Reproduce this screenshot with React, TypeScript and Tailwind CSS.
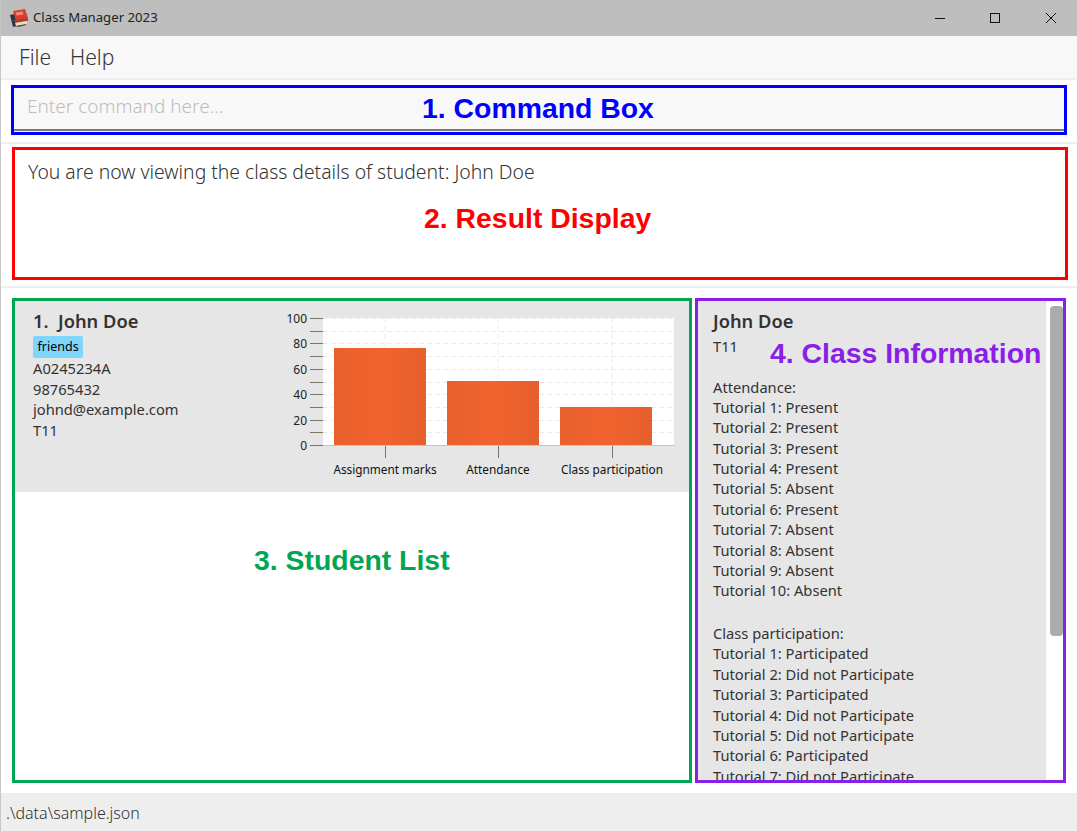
const attendance = ["Present", "Present", "Present", "Present", "Absent", "Present", "Absent", "Absent", "Absent", "Absent"];
const participation = ["Participated", "Did not Participate", "Participated", "Did not Participate", "Did not Participate", "Participated", "Did not Participate"];

const bars = [
  { label: "Assignment marks", x: 54, top: 43, tick: 105 },
  { label: "Attendance", x: 167, top: 76, tick: 218 },
  { label: "Class participation", x: 280, top: 102, tick: 332 },
];

function BarChart() {
  const rows = [13, 26, 38, 51, 64, 77, 89, 102, 115, 127];
  return (
    <svg width="400" height="180" className="shrink-0" style={{ fontFamily: "'Noto Sans', sans-serif" }}>
      <defs>
        <linearGradient id="bar" x1="0" x2="1" y1="0" y2="0">
          <stop offset="0" stopColor="#e8602d" />
          <stop offset="0.5" stopColor="#f2632e" />
          <stop offset="1" stopColor="#e55f2c" />
        </linearGradient>
      </defs>
      <rect x="43" y="13" width="351" height="127" fill="#fff" />
      {rows.map((r) => (
        <line key={r} x1="43" x2="394" y1={r + 0.5} y2={r + 0.5} stroke="#ececec" strokeDasharray="5 3" />
      ))}
      {[105, 218, 332].map((t) => (
        <line key={t} x1={t} x2={t} y1="13" y2="140" stroke="#ececec" strokeDasharray="5 3" />
      ))}
      {bars.map((b) => (
        <rect key={b.label} x={b.x} y={b.top} width="92" height={140 - b.top} fill="url(#bar)" />
      ))}
      <line x1="43" x2="395" y1="140.5" y2="140.5" stroke="#c4c4c4" />
      {[13, 26, 38, 51, 64, 77, 89, 102, 115, 127, 140].map((r) => (
        <line key={r} x1="30" x2="43" y1={r + 0.5} y2={r + 0.5} stroke="#77776a" />
      ))}
      {[["100", 13], ["80", 38], ["60", 64], ["40", 89], ["20", 115], ["0", 140]].map(([t, y]) => (
        <text key={t} x="27" y={Number(y) + 5} textAnchor="end" fontSize="12" fill="#222">{t}</text>
      ))}
      {bars.map((b) => (
        <g key={b.tick}>
          <line x1={b.tick + 0.5} x2={b.tick + 0.5} y1="141" y2="153" stroke="#77776a" />
          <text x={b.tick} y="169" textAnchor="middle" fontSize="11.800" fill="#111">{b.label}</text>
        </g>
      ))}
    </svg>
  );
}

function BooksIcon() {
  return (
    <svg width="18" height="18" viewBox="0 0 18 18">
      <path d="M0 6l5-1 2 12-4 1z" fill="#27344f" />
      <path d="M3 2l12-2 3 9-12 3z" fill="#d63c30" />
      <path d="M5.500 3.500l7-1 1 3-7 1z" fill="#ee8a7c" />
      <path d="M4 11l14-2v3L5 14z" fill="#b5372c" />
      <path d="M5 14l12-2v3L6 17z" fill="#e8dcc0" />
      <path d="M6 17l10-2v1l-8 2z" fill="#4a3a34" />
    </svg>
  );
}

export default function App() {
  return (
    <div className="w-[1077px] h-[831px] flex flex-col bg-white overflow-hidden border-l border-[#c8c8c8] font-['Noto_Sans',sans-serif] text-[#333]">
      {/* title bar */}
      <div className="h-9 shrink-0 -ml-px flex items-center bg-[#bebebe] pl-[10px] text-[13.200px] text-[#222]">
        <BooksIcon />
        <span className="ml-[5px]">Class Manager 2023</span>
        <div className="ml-auto flex items-center text-black">
          <svg width="12" height="12" className="mr-[43px]"><path d="M1 6.500h10" stroke="#111" /></svg>
          <svg width="12" height="12" className="mr-[44px]"><rect x="1.500" y="1.500" width="9" height="9" fill="none" stroke="#111" /></svg>
          <svg width="12" height="12" className="mr-[20px]"><path d="M1 1l10 10M11 1L1 11" stroke="#111" /></svg>
        </div>
      </div>

      {/* menu */}
      <div className="h-11 shrink-0 flex items-center gap-[19px] bg-[#f8f8f8] border-b-2 border-[#eee] pl-[18px] pt-[2px] text-[21px] font-light text-[#333]">
        <span>File</span>
        <span>Help</span>
      </div>

      {/* command box */}
      <div className="h-[64px] shrink-0 border-b-2 border-[#eee] pl-[10px] pr-[10px] pt-[5px]">
        <div className="relative h-[50px] border-[3px] border-[#0000ff] bg-[#f8f8f8]">
          <div className="h-[43px] border-b-2 border-[#7a7a7a] pl-[13px] pb-[4px] flex items-center text-[19px] font-light text-[#bdbdbd]">
            Enter command here...
          </div>
          <span className="absolute left-[408px] top-[1px] font-['Liberation_Sans',sans-serif] font-bold text-[28.400px] leading-[38px] text-[#0000ff] whitespace-nowrap">
            1. Command Box
          </span>
        </div>
      </div>

      {/* result display */}
      <div className="h-[144px] shrink-0 border-b-2 border-[#eee] pl-[11px] pr-[9px] pt-[3px]">
        <div className="relative h-[133px] border-[3px] border-[#ff0000] pl-[13px] pt-[8px] text-[19.350px] leading-[28px] font-light">
          You are now viewing the class details of student: John Doe
          <span className="absolute left-[409px] top-[49px] font-['Liberation_Sans',sans-serif] font-bold text-[28.400px] leading-[38px] text-[#ff0000] whitespace-nowrap">
            2. Result Display
          </span>
        </div>
      </div>

      {/* lists */}
      <div className="h-[505px] shrink-0 flex pl-[11px] pt-[10px] gap-[3px]">
        <div className="relative w-[680px] h-[485px] border-[3px] border-[#00a651]">
          <div className="h-[191px] bg-[#e6e6e6] flex justify-between pr-[9px] pl-[18px] pt-[8px]">
            <div className="flex flex-col items-start text-[14.700px] leading-[20.500px]">
              <div className="font-semibold text-[18.300px] leading-[23px] whitespace-pre">1.  John Doe</div>
              <div className="mt-[4px] h-[22px] px-[4.500px] rounded-[2px] bg-[#7fd5fb] text-black text-[12.500px] leading-[21px]">friends</div>
              <div>A0245234A</div>
              <div>98765432</div>
              <div>johnd@example.com</div>
              <div>T11</div>
            </div>
            <div className="-mt-[4px]">
              <BarChart />
            </div>
          </div>
          <span className="absolute left-[239px] top-[240px] font-['Liberation_Sans',sans-serif] font-bold text-[28.400px] leading-[38px] text-[#00a651] whitespace-nowrap">
            3. Student List
          </span>
        </div>

        <div className="relative w-[371px] h-[485px] border-[3px] border-[#8a20e8] flex">
          <div className="w-[348px] bg-[#e6e6e6] overflow-hidden pl-[15px] pt-[8px] text-[14.700px] leading-[20.400px]">
            <div className="font-semibold text-[18.300px] leading-[23px]">John Doe</div>
            <div className="mt-[4px]">T11</div>
            <div className="mt-[21px] -mb-[1px]">Attendance:</div>
            {attendance.map((a, i) => (
              <div key={i}>Tutorial {i + 1}: {a}</div>
            ))}
            <div className="mt-[22px]">Class participation:</div>
            {participation.map((p, i) => (
              <div key={i}>Tutorial {i + 1}: {p}</div>
            ))}
          </div>
          <div className="flex-1 pl-[4px] pt-[5px]">
            <div className="w-[13px] h-[330px] rounded-[4px] bg-[#ababab]" />
          </div>
          <span className="absolute left-[72px] top-[33px] font-['Liberation_Sans',sans-serif] font-bold text-[28.400px] leading-[38px] text-[#8a20e8] whitespace-nowrap">
            4. Class Information
          </span>
        </div>
      </div>

      {/* status bar */}
      <div className="flex-1 bg-[#eeeeee] pl-[5px] pt-[1px] flex items-center text-[16px] font-light text-[#333]">
        .\data\sample.json
      </div>
    </div>
  );
}
